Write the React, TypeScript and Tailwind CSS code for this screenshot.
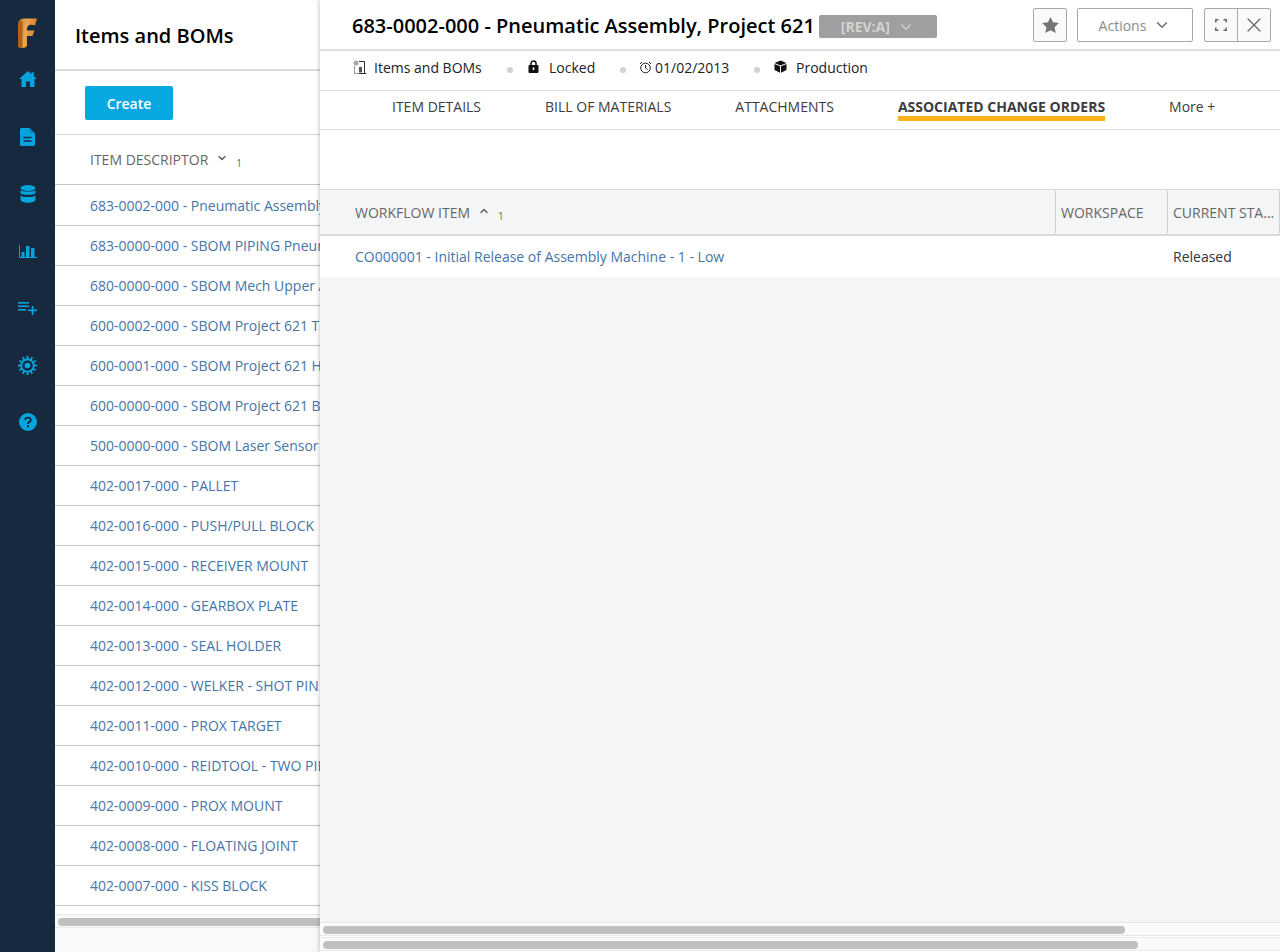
import React from "react";
import { ChevronDown, ChevronUp, X } from "lucide-react";

const font = { fontFamily: '"Open Sans", sans-serif' };

const rows = [
  "683-0002-000 - Pneumatic Assembly, Project 621",
  "683-0000-000 - SBOM PIPING Pneumatic",
  "680-0000-000 - SBOM Mech Upper Assembly",
  "600-0002-000 - SBOM Project 621 Tooling",
  "600-0001-000 - SBOM Project 621 Hardware",
  "600-0000-000 - SBOM Project 621 Base",
  "500-0000-000 - SBOM Laser Sensor Assembly",
  "402-0017-000 - PALLET",
  "402-0016-000 - PUSH/PULL BLOCK",
  "402-0015-000 - RECEIVER MOUNT",
  "402-0014-000 - GEARBOX PLATE",
  "402-0013-000 - SEAL HOLDER",
  "402-0012-000 - WELKER - SHOT PIN ASSEMBLY",
  "402-0011-000 - PROX TARGET",
  "402-0010-000 - REIDTOOL - TWO PIECE",
  "402-0009-000 - PROX MOUNT",
  "402-0008-000 - FLOATING JOINT",
  "402-0007-000 - KISS BLOCK",
];

function Logo() {
  return (
    <svg width="20" height="31" viewBox="0 0 20 31">
      <defs>
        <linearGradient id="fg" x1="0" y1="0" x2="1" y2="0.2">
          <stop offset="0" stopColor="#b8691f" />
          <stop offset="0.45" stopColor="#eaa858" />
          <stop offset="1" stopColor="#d97f24" />
        </linearGradient>
      </defs>
      <path d="M0.500 7C0.500 2.500 3 0.500 7 0.500H19.500L17.500 7.500C15 6.500 12 6.500 10.500 8C9.500 9 9.500 11 9.500 12.500H17L15 18H9.500V28C8 30 5 30.500 2 29.500L0.500 28Z" fill="url(#fg)" />
      <path d="M0.500 7C0.500 4 2 2 4 3C5.500 4 5 9 5 12V30L2 29.500L0.500 28Z" fill="#b0611b" />
    </svg>
  );
}

const c = "#04a4dc";

function Home() {
  return (
    <svg width="18" height="16" viewBox="0 0 18 16" fill={c}>
      <path d="M9 0L0 8h2.500v8h4.600v-5.400h3.800V16h4.600V8H18L14.800 5.200V1.200h-2.300v2z" />
    </svg>
  );
}
function Doc() {
  return (
    <svg width="15" height="18" viewBox="0 0 15 18">
      <path d="M1.500 0H9.500L15 5.500V16.500A1.500 1.500 0 0 1 13.500 18H1.500A1.500 1.500 0 0 1 0 16.500V1.500A1.500 1.500 0 0 1 1.500 0Z" fill={c} />
      <path d="M9.500 0V5.500H15" fill="#0b8fc0" />
      <path d="M3.500 9.500H11.500M3.500 13H11.500" stroke="#16293f" strokeWidth="1.500" />
    </svg>
  );
}
function Db() {
  return (
    <svg width="16" height="18" viewBox="0 0 16 18" fill={c}>
      <ellipse cx="8" cy="3" rx="7.500" ry="3" />
      <path d="M0.500 5C2 7 14 7 15.500 5V8.200C14 10.400 2 10.400 0.500 8.200Z" />
      <path d="M0.500 10.400C2 12.600 14 12.600 15.500 10.400V15C14 18.700 2 18.700 0.500 15Z" />
    </svg>
  );
}
function Bars() {
  return (
    <svg width="18" height="13" viewBox="0 0 18 13" fill={c}>
      <path d="M0 0H1V12H18V13H0Z" />
      <rect x="2.500" y="7" width="3" height="5" />
      <rect x="7" y="1" width="3.500" height="11" />
      <rect x="12" y="3" width="3.500" height="9" />
    </svg>
  );
}
function ListPlus() {
  return (
    <svg width="19" height="13" viewBox="0 0 19 13" fill={c}>
      <rect x="0" y="0" width="11" height="1.600" />
      <rect x="0" y="3.500" width="11" height="1.600" />
      <rect x="0" y="7" width="8" height="1.600" />
      <rect x="10" y="7.500" width="9" height="1.700" />
      <rect x="13.700" y="4" width="1.700" height="9" />
    </svg>
  );
}
function Gear() {
  const teeth = Array.from({ length: 12 }, (_, i) => i * 30);
  return (
    <svg width="19" height="19" viewBox="0 0 19 19">
      {teeth.map((a) => (
        <rect key={a} x="8.500" y="0" width="2" height="4" fill={c} transform={`rotate(${a} 9.500 9.500)`} />
      ))}
      <circle cx="9.500" cy="9.500" r="6.200" fill="none" stroke={c} strokeWidth="1.800" />
      <circle cx="9.500" cy="9.500" r="2.800" fill={c} />
    </svg>
  );
}
function Help() {
  return (
    <svg width="18" height="18" viewBox="0 0 18 18">
      <circle cx="9" cy="9" r="9" fill={c} />
      <path d="M6.200 7C6.200 3.800 11.800 3.800 11.800 7C11.800 9 9 9 9 11" fill="none" stroke="#16293f" strokeWidth="1.900" />
      <rect x="8" y="12.300" width="2" height="2" fill="#16293f" />
    </svg>
  );
}

function Dot() {
  return <span className="mt-[4px] h-[6px] w-[6px] rounded-full bg-[#d0d2d4]" />;
}

function ScrollBar({ width }: { width: number }) {
  return (
    <div className="flex h-[14px] shrink-0 items-end border-y border-[#e8e8e8] bg-[#fafafa] px-[3px] pb-[1px]">
      <div className="h-[8px] shrink-0 rounded-full bg-[#bfbfbf]" style={{ width }} />
    </div>
  );
}

function Th({ children, className = "" }: { children: React.ReactNode; className?: string }) {
  return <div className={`flex h-full items-center text-[14px] text-[#666] ${className}`}>{children}</div>;
}

function Tab({ children, active }: { children: React.ReactNode; active?: boolean }) {
  return (
    <div
      className={`h-[29px] whitespace-nowrap pt-[5px] text-[14px] leading-[19px] ${
        active ? "border-b-[5px] border-[#fdb119] font-bold text-[#3c3c3c]" : "text-[#3c3c3c]"
      }`}
    >
      {children}
    </div>
  );
}

export default function App() {
  return (
    <div className="flex h-[952px] w-[1280px] overflow-hidden bg-white opacity-[0.999]" style={font}>
      <aside className="flex w-[55px] shrink-0 flex-col items-center bg-[#16293f]">
        <div className="mt-[18px] h-[31px] w-[20px] -translate-x-[0.5px]">
          <Logo />
        </div>
        <div className="mt-[22px] flex flex-col items-center">
          <div className="flex h-[16px] items-center"><Home /></div>
          <div className="mt-[41px] flex h-[18px] items-center"><Doc /></div>
          <div className="mt-[39px] flex h-[18px] items-center"><Db /></div>
          <div className="mt-[41px] flex h-[14px] items-center"><Bars /></div>
          <div className="mt-[44px] flex h-[13px] items-center"><ListPlus /></div>
          <div className="mt-[41px] flex h-[19px] items-center"><Gear /></div>
          <div className="mt-[38px] flex h-[18px] items-center"><Help /></div>
        </div>
      </aside>

      <section className="flex w-[265px] shrink-0 flex-col overflow-hidden">
        <div className="flex h-[71px] shrink-0 items-center border-b-2 border-[#d9dbdc] pl-[20px] pt-[3px] text-[20px] font-semibold text-black">
          Items and BOMs
        </div>
        <div className="flex h-[64px] shrink-0 items-start border-b border-[#d0d6db] pl-[30px] pt-[15px]">
          <div className="flex h-[34px] w-[88px] items-center justify-center rounded-[2px] bg-[#05a8e0] text-[14px] font-semibold text-white">
            Create
          </div>
        </div>
        <div className="flex h-[50px] shrink-0 items-center border-b border-[#bcc7d1] pl-[35px] text-[14px] text-[#666]">
          <span>ITEM DESCRIPTOR</span>
          <ChevronDown className="ml-[8px] -mt-[3px] h-[12px] w-[12px]" strokeWidth={2.500} color="#555" />
          <span className="ml-[8px] mt-[8px] text-[10px] text-[#666]">1</span>
        </div>
        <div className="flex shrink-0 flex-col pt-[1px]">
          {rows.map((r) => (
            <div
              key={r}
              className="flex h-[40px] shrink-0 items-center whitespace-nowrap border-b border-[#bcc7d1] pl-[35px] text-[14px] text-[#4674a8]"
            >
              {r}
            </div>
          ))}
        </div>
        <div className="mt-[8px]">
          <ScrollBar width={300} />
        </div>
        <div className="flex-1 bg-[#f8f9fa]" />
      </section>

      <main className="relative z-10 flex min-w-0 flex-1 flex-col bg-white shadow-[-1px_0_4px_rgba(0,0,0,0.2)]">
        <header className="flex h-[51px] shrink-0 items-start border-b-2 border-[#dfdfdf]">
          <div className="ml-[32px] mt-[10px] whitespace-nowrap text-[20px] font-semibold leading-[32px] text-black">
            683-0002-000 - Pneumatic Assembly, Project 621
          </div>
          <div className="ml-[4px] mt-[15px] flex h-[23px] w-[118px] items-center justify-center gap-[7px] rounded-[2px] bg-[#9f9f9f] text-[14px] font-bold text-[#d3d3d3]">
            <span>[REV:A]</span>
            <ChevronDown className="h-[18px] w-[18px]" strokeWidth={1.500} />
          </div>
          <div className="ml-auto mr-[9px] mt-[8px] flex items-start">
            <div className="flex h-[34px] w-[34px] items-center justify-center rounded-[2px] border border-[#a8a8a8] bg-[#fafafa]">
              <svg width="17" height="16" viewBox="0 0 24 23" fill="#757575">
                <path d="M12 0l3.700 7.700 8.300 1.100-6.100 5.800 1.600 8.400L12 18.900 4.500 23l1.600-8.400L0 8.800l8.300-1.100z" />
              </svg>
            </div>
            <div className="ml-[10px] flex h-[34px] w-[116px] items-center justify-center gap-[7px] rounded-[2px] border border-[#a8a8a8] text-[14px] text-[#8a8a8a]">
              <span>Actions</span>
              <ChevronDown className="h-[18px] w-[18px] text-[#666]" strokeWidth={1.700} />
            </div>
            <div className="ml-[11px] flex h-[34px] w-[67px] rounded-[2px] border border-[#a8a8a8] bg-[#fafafa]">
              <div className="flex w-[33px] items-center justify-center border-r border-[#a8a8a8]">
                <svg width="12" height="12" viewBox="0 0 12 12" fill="none" stroke="#666" strokeWidth="1.500">
                  <path d="M0.800 3.500V0.800H3.500M8.500 0.800H11.200V3.500M11.200 8.500V11.200H8.500M3.500 11.200H0.800V8.500" />
                </svg>
              </div>
              <div className="flex flex-1 items-center justify-center">
                <X className="h-[24px] w-[24px] text-[#666]" strokeWidth={1.200} />
              </div>
            </div>
          </div>
        </header>

        <div className="flex h-[40px] shrink-0 items-center border-b border-[#dfdfdf] pb-[6px] text-[14px] text-[#222]">
          <svg className="ml-[33px] -mt-[1px]" width="14" height="15" viewBox="0 0 14 15" fill="none">
            <circle cx="3" cy="3" r="2.500" fill="#a9a9a9" />
            <path d="M6 1.500H11.500V13M5.500 13.500H13.500" stroke="#333" strokeWidth="1" />
            <path d="M6 7H9V12.500H6Z" fill="#555" />
            <path d="M1.500 6V13.500H5" stroke="#999" strokeWidth="1" />
          </svg>
          <span className="ml-[7px] w-[108px]">Items and BOMs</span>
          <div className="ml-[25px] flex items-center"><Dot /></div>
          <svg className="ml-[15px] -mt-[3px]" width="11" height="13" viewBox="0 0 11 13">
            <path d="M1 5.500H10V12.500H1Z" fill="#111" stroke="#111" strokeLinejoin="round" />
            <path d="M3 5.500V3.500A2.500 2.500 0 0 1 8 3.500V5.500" fill="none" stroke="#111" strokeWidth="1.500" />
            <rect x="4.700" y="7.500" width="1.600" height="2.500" fill="#fff" />
          </svg>
          <span className="ml-[10px] w-[47px]">Locked</span>
          <div className="ml-[24px] flex items-center"><Dot /></div>
          <svg className="ml-[13px]" width="13" height="13" viewBox="0 0 13 13" fill="none" stroke="#222">
            <circle cx="6.500" cy="7" r="4.800" />
            <path d="M6.500 4V7L8.500 8.500M1 3L3 1M12 3L10 1" />
          </svg>
          <span className="ml-[3px] w-[74px]">01/02/2013</span>
          <div className="ml-[25px] flex items-center"><Dot /></div>
          <svg className="ml-[14px] -mt-[3px]" width="13" height="13" viewBox="0 0 13 13" fill="#111">
            <path d="M6.500 0.500L12.500 3L6.500 5.500L0.500 3Z" />
            <path d="M0.500 4L6 6.300V12.800L0.500 10Z" />
            <path d="M12.500 4L7 6.300V12.800L12.500 10Z" />
          </svg>
          <span className="ml-[9px]">Production</span>
        </div>

        <nav className="flex h-[39px] shrink-0 items-start gap-[64px] border-b border-[#dfdfdf] pl-[72px] pt-[1px]">
          <Tab>ITEM DETAILS</Tab>
          <Tab>BILL OF MATERIALS</Tab>
          <Tab>ATTACHMENTS</Tab>
          <Tab active>ASSOCIATED CHANGE ORDERS</Tab>
          <Tab>More +</Tab>
        </nav>

        <div className="h-[59px] shrink-0 bg-white" />

        <div className="flex h-[47px] shrink-0 items-stretch border-y border-b-2 border-[#d8dde1] bg-[#f4f5f7]">
          <Th className="w-[735px] shrink-0 pl-[35px]">
            <span>WORKFLOW ITEM</span>
            <ChevronUp className="ml-[8px] -mt-[3px] h-[12px] w-[12px]" strokeWidth={2.500} color="#555" />
            <span className="ml-[8px] mt-[8px] text-[10px] text-[#666]">1</span>
          </Th>
          <Th className="w-[112px] shrink-0 border-l border-[#cdd3d8] pl-[5px]">WORKSPACE</Th>
          <Th className="min-w-0 flex-1 whitespace-nowrap border-x border-[#cdd3d8] pl-[5px]">CURRENT STA...</Th>
        </div>
        <div className="flex h-[41px] shrink-0 items-center text-[14px]">
          <div className="w-[848px] shrink-0 pl-[35px] text-[#4674a8]">
            CO000001 - Initial Release of Assembly Machine - 1 - Low
          </div>
          <div className="pl-[5px] text-[#333]">Released</div>
        </div>
        <div className="flex-1 bg-[#f4f5f7]" />
        <ScrollBar width={802} />
        <div className="h-[1px] shrink-0 bg-white" />
        <ScrollBar width={815} />
        <div className="h-[1px] shrink-0 bg-white" />
      </main>
    </div>
  );
}
